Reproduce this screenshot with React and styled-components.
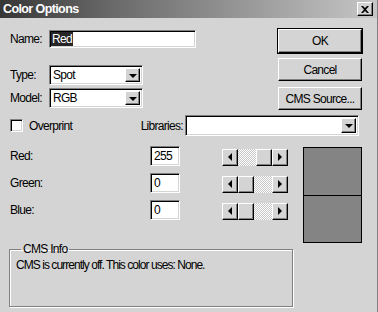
import React from "react";
import styled, { createGlobalStyle, css } from "styled-components";

const GlobalStyle = createGlobalStyle`
  html, body { margin: 0; padding: 0; }
  body {
    background: #d4d4d4;
    font-family: "Liberation Sans", Arial, sans-serif;
    font-size: 12px;
    letter-spacing: -0.7px;
    color: #000;
  }
`;

const raised = css`
  box-sizing: border-box;
  background: #d4d4d4;
  border-top: 1px solid #fff;
  border-left: 1px solid #fff;
  border-right: 1px solid #000;
  border-bottom: 1px solid #000;
  box-shadow: inset -1px -1px 0 #808080;
`;

const sunken = css`
  box-sizing: border-box;
  background: #fff;
  border-top: 1px solid #808080;
  border-left: 1px solid #808080;
  border-right: 1px solid #fff;
  border-bottom: 1px solid #fff;
  box-shadow: inset 1px 1px 0 #000, inset -1px -1px 0 #d4d4d4;
`;

const Window = styled.div`
  width: 378px;
  height: 312px;
  box-sizing: border-box;
  background: #d4d4d4;
  border-right: 1px solid #808080;
  overflow: hidden;
  display: flex;
  flex-direction: column;
`;

const TitleBar = styled.div`
  height: 18px;
  flex: none;
  display: flex;
  align-items: center;
  justify-content: space-between;
  padding: 0 4px 0 3px;
  background: linear-gradient(to right, #363636 0%, #6a6a6a 30%, #c6c6c6 100%);
  color: #fff;
  font-weight: bold;
  font-size: 12.5px;
  letter-spacing: -0.6px;
`;

const CloseButton = styled.div`
  ${raised};
  width: 16px;
  height: 14px;
  display: flex;
  align-items: center;
  justify-content: center;
  color: #000;
  svg { display: block; }
`;

const Body = styled.div`
  padding: 11px 15px 0 10px;
  display: flex;
  flex-direction: column;
`;

const TopSection = styled.div`
  display: flex;
  justify-content: space-between;
`;

const Fields = styled.div`
  display: flex;
  flex-direction: column;
  padding-top: 1px;
`;

const FieldRow = styled.div`
  display: flex;
  align-items: center;
  margin-top: ${(p) => p.$gap || 0}px;
`;

const Label = styled.span`
  width: ${(p) => p.$w}px;
  flex: none;
  white-space: nowrap;
`;

const TextInput = styled.div`
  ${sunken};
  width: ${(p) => p.$w}px;
  height: ${(p) => p.$h}px;
  padding: 0 3px;
  display: flex;
  align-items: center;
`;

const Selected = styled.span`
  background: #262626;
  color: #fff;
  padding: 0 1px;
  margin-left: -2px;
`;

const Select = styled.div`
  ${sunken};
  width: ${(p) => p.$w}px;
  height: ${(p) => p.$h}px;
  display: flex;
  align-items: center;
  padding: 2px 2px 2px 3px;
`;

const SelectText = styled.span`
  flex: 1;
`;

const DropButton = styled.div`
  ${raised};
  width: 15px;
  height: 100%;
  display: flex;
  align-items: center;
  justify-content: center;
  &::after {
    content: "";
    border-left: 4px solid transparent;
    border-right: 4px solid transparent;
    border-top: 4px solid #000;
    margin-top: 1px;
  }
`;

const Buttons = styled.div`
  display: flex;
  flex-direction: column;
  width: 84px;
`;

const PushButton = styled.div`
  ${raised};
  height: ${(p) => p.$h}px;
  margin-top: ${(p) => p.$gap || 0}px;
  display: flex;
  align-items: center;
  justify-content: center;
  ${(p) =>
    p.$default &&
    css`
      outline: 1px solid #000;
      outline-offset: 0;
    `}
`;

const OptionRow = styled.div`
  display: flex;
  align-items: center;
  margin-top: 5px;
  padding-right: 3px;
`;

const Check = styled.div`
  ${sunken};
  width: 13px;
  height: 13px;
  margin-right: 6px;
`;

const Spacer = styled.div`
  flex: 1;
`;

const LibLabel = styled.span`
  margin-right: 2px;
`;

const ColorSection = styled.div`
  display: flex;
  margin-top: 10px;
`;

const Sliders = styled.div`
  display: grid;
  grid-template-columns: 140px 72px 66px;
  grid-auto-rows: 20px;
  row-gap: 7px;
  align-items: center;
  align-content: start;
`;

const ScrollBar = styled.div`
  display: flex;
  width: 66px;
  height: 17px;
  margin-top: 2px;
`;

const Arrow = styled.div`
  ${raised};
  width: 16px;
  height: 100%;
  flex: none;
  display: flex;
  align-items: center;
  justify-content: center;
  &::after {
    content: "";
    border-top: 4px solid transparent;
    border-bottom: 4px solid transparent;
    ${(p) =>
      p.$dir === "left"
        ? css`border-right: 4px solid #000;`
        : css`border-left: 4px solid #000;`}
  }
`;

const Track = styled.div`
  flex: 1;
  display: flex;
  background: repeating-conic-gradient(#fff 0 25%, #c8c8c8 0 50%) 0 0 / 2px 2px;
`;

const Thumb = styled.div`
  ${raised};
  width: 16px;
  height: 100%;
  margin-left: ${(p) => (p.$end ? "auto" : 0)};
`;

const Swatch = styled.div`
  margin-left: 15px;
  margin-top: 1px;
  width: 60px;
  height: 96px;
  box-sizing: border-box;
  border: 1px solid #000;
  background: #848484;
  display: flex;
  flex-direction: column;
  & > div { flex: 1; }
  & > div + div { border-top: 1px solid #000; }
`;

const GroupBox = styled.fieldset`
  margin: 0 0 0 -1px;
  width: 284px;
  height: 64px;
  box-sizing: border-box;
  padding: 3px 6px 0 6px;
  border: 1px solid #808080;
  box-shadow: 1px 1px 0 #fff, inset 1px 1px 0 #fff;
  letter-spacing: -0.95px;
  legend {
    padding: 0 2px;
    margin-left: 5px;
    line-height: 12px;
    letter-spacing: -0.7px;
  }
`;

const sliders = [
  { label: "Red:", value: "255", end: true },
  { label: "Green:", value: "0", end: false },
  { label: "Blue:", value: "0", end: false },
];

export default function App() {
  return (
    <>
      <GlobalStyle />
      <Window>
        <TitleBar>
          <span>Color Options</span>
          <CloseButton>
            <svg width="8" height="7" viewBox="0 0 8 7">
              <path d="M0 0h2l2 2 2-2h2L5 3.5 8 7H6L4 5 2 7H0l3-3.5z" fill="#000" />
            </svg>
          </CloseButton>
        </TitleBar>
        <Body>
          <TopSection>
            <Fields>
              <FieldRow>
                <Label $w={39}>Name:</Label>
                <TextInput $w={147} $h={18}>
                  <Selected>Red</Selected>
                </TextInput>
              </FieldRow>
              <FieldRow $gap={17}>
                <Label $w={39}>Type:</Label>
                <Select $w={94} $h={20}>
                  <SelectText>Spot</SelectText>
                  <DropButton />
                </Select>
              </FieldRow>
              <FieldRow $gap={3}>
                <Label $w={39}>Model:</Label>
                <Select $w={94} $h={20}>
                  <SelectText>RGB</SelectText>
                  <DropButton />
                </Select>
              </FieldRow>
            </Fields>
            <Buttons>
              <PushButton $h={24} $default>OK</PushButton>
              <PushButton $h={23} $gap={5}>Cancel</PushButton>
              <PushButton $h={23} $gap={6}>CMS Source...</PushButton>
            </Buttons>
          </TopSection>

          <OptionRow>
            <Check />
            <span>Overprint</span>
            <Spacer />
            <LibLabel>Libraries:</LibLabel>
            <Select $w={174} $h={21}>
              <SelectText />
              <DropButton />
            </Select>
          </OptionRow>

          <ColorSection>
            <Sliders>
              {sliders.map((s) => (
                <React.Fragment key={s.label}>
                  <Label $w={140}>{s.label}</Label>
                  <TextInput $w={30} $h={20}>{s.value}</TextInput>
                  <ScrollBar>
                    <Arrow $dir="left" />
                    <Track>
                      <Thumb $end={s.end} />
                    </Track>
                    <Arrow $dir="right" />
                  </ScrollBar>
                </React.Fragment>
              ))}
            </Sliders>
            <Swatch>
              <div />
              <div />
            </Swatch>
          </ColorSection>

          <GroupBox>
            <legend>CMS Info</legend>
            CMS is currently off. This color uses: None.
          </GroupBox>
        </Body>
      </Window>
    </>
  );
}
